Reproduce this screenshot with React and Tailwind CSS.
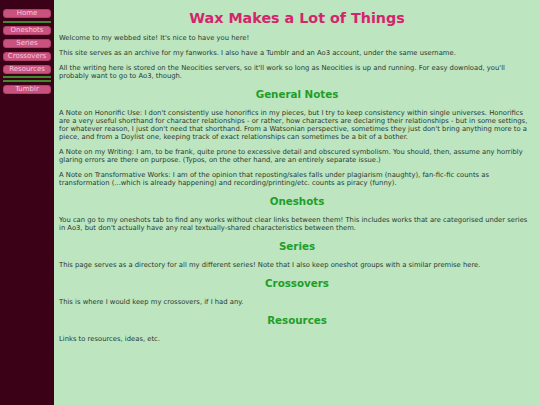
export default function App() {
  const nav1 = ["Oneshots", "Series", "Crossovers", "Resources"];
  const Btn = ({ children }) => (
    <div className="mx-[3px] h-[9px] rounded-[3px] bg-[#c9527f] border border-[#b03f6b] text-[#f5c8dc] text-[7px] leading-[7px] text-center">
      {children}
    </div>
  );
  const H2 = ({ children }) => (
    <h2 className="mt-[1px] mb-[8px] mr-[-5px] text-center text-[10.3px] leading-[13px] font-bold text-[#1f9e2a]">{children}</h2>
  );
  const P = ({ children, last }) => (
    <p className={`${last ? "" : "mb-[7px]"} text-[6.8px] leading-[8px] text-[#2b3a2e]`}>{children}</p>
  );
  return (
    <div className="flex min-h-screen w-full" style={{ fontFamily: '"DejaVu Sans", Verdana, sans-serif' }}>
      <div className="w-[54px] shrink-0 bg-[#3b0217] pt-[8.5px] flex flex-col">
        <Btn>Home</Btn>
        <div className="mx-[3px] mt-[3px] mb-[3px] h-[2px] bg-[#3f8a2c]" />
        <div className="flex flex-col gap-[4px]">
          {nav1.map((n) => (
            <Btn key={n}>{n}</Btn>
          ))}
        </div>
        <div className="mx-[3px] mt-[2px] h-[2px] bg-[#3f8a2c]" />
        <div className="mx-[3px] mt-[2px] mb-[3px] h-[2px] bg-[#3f8a2c]" />
        <Btn>Tumblr</Btn>
      </div>
      <div className="flex-1 bg-[#bce5c0] pl-[5px] pr-[10px] pt-[10px] flex flex-col">
        <h1 className="mb-[8px] mr-[-5px] text-center text-[14.3px] leading-[16px] font-bold text-[#d4256c]">Wax Makes a Lot of Things</h1>
        <P>Welcome to my webbed site! It's nice to have you here!</P>
        <P>This site serves as an archive for my fanworks. I also have a Tumblr and an Ao3 account, under the same username.</P>
        <P>All the writing here is stored on the Neocities servers, so it'll work so long as Neocities is up and running. For easy download, you'll probably want to go to Ao3, though.</P>
        <H2>General Notes</H2>
        <P>A Note on Honorific Use: I don't consistently use honorifics in my pieces, but I try to keep consistency within single universes. Honorifics are a very useful shorthand for character relationships - or rather, how characters are declaring their relationships - but in some settings, for whatever reason, I just don't need that shorthand. From a Watsonian perspective, sometimes they just don't bring anything more to a piece, and from a Doylist one, keeping track of exact relationships can sometimes be a bit of a bother.</P>
        <P>A Note on my Writing: I am, to be frank, quite prone to excessive detail and obscured symbolism. You should, then, assume any horribly glaring errors are there on purpose. (Typos, on the other hand, are an entirely separate issue.)</P>
        <P>A Note on Transformative Works: I am of the opinion that reposting/sales falls under plagiarism (naughty), fan-fic-fic counts as transformation (...which is already happening) and recording/printing/etc. counts as piracy (funny).</P>
        <H2>Oneshots</H2>
        <P>You can go to my oneshots tab to find any works without clear links between them! This includes works that are categorised under series in Ao3, but don't actually have any real textually-shared characteristics between them.</P>
        <H2>Series</H2>
        <P>This page serves as a directory for all my different series! Note that I also keep oneshot groups with a similar premise here.</P>
        <H2>Crossovers</H2>
        <P>This is where I would keep my crossovers, if I had any.</P>
        <H2>Resources</H2>
        <P last>Links to resources, ideas, etc.</P>
      </div>
    </div>
  );
}
